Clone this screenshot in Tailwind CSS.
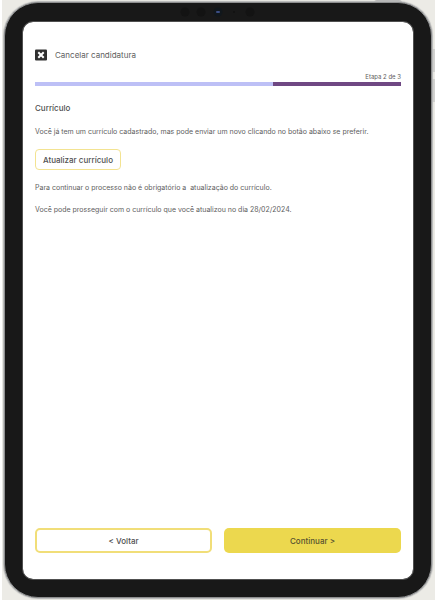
<!DOCTYPE html>
<html lang="pt-BR">
<head>
<meta charset="utf-8">
<meta name="viewport" content="width=device-width, initial-scale=1">
<title>Candidatura</title>
<script src="https://cdn.jsdelivr.net/npm/@tailwindcss/browser@4"></script>
</head>
<body class="bg-white pl-[2px] font-['Inter','Liberation_Sans',sans-serif] text-[#606060]">
<div class="relative flex min-h-screen flex-col bg-[#ecebe6] pt-[2px] pr-[3px] pb-[2px] pl-[2px]">
  <!-- side and top hardware buttons -->
  <span class="absolute top-0 right-[33px] h-[3px] w-[28px] rounded-t-sm bg-[#b8b8b8]"></span>
  <span class="absolute top-[49px] right-0 h-[23px] w-[3px] bg-[#d2d2d0]"></span>
  <span class="absolute top-[79px] right-0 h-[23px] w-[3px] bg-[#d2d2d0]"></span>
  <div class="relative flex flex-1 flex-col rounded-[34px] border border-[#8d8e8f] bg-[#181818] px-[18px] pt-[19px] pb-[18px] shadow-[0_0_1px_1px_#b5b6b6]">
    <svg class="absolute top-0 left-1/2 h-[18px] w-[80px] -translate-x-1/2" viewBox="0 0 80 18" aria-hidden="true">
      <circle cx="7" cy="9" r="4.5" fill="#131313"/>
      <circle cx="23" cy="9" r="4.5" fill="#131313"/>
      <circle cx="40" cy="9" r="4.5" fill="#11171c"/>
      <rect x="38" y="8" width="4" height="2" rx="1" fill="#3c4e84"/>
      <circle cx="56" cy="9" r="1" fill="#111"/>
      <circle cx="72" cy="9" r="4.5" fill="#131313"/>
    </svg>
    <main class="flex flex-1 flex-col rounded-[10px] bg-white px-3 pt-[27px] pb-[26px] outline outline-[#777]/60">
      <button type="button" class="flex h-3 items-center gap-2 self-start text-[8px] leading-3">
        <svg class="size-3" viewBox="0 0 12 12" aria-hidden="true">
          <rect x="0" y="0.5" width="12" height="11" rx="1" fill="#303030"/>
          <path d="M4 4l4 4M8 4l-4 4" stroke="#fff" stroke-width="2" stroke-linecap="square"/>
        </svg>
        <span>Cancelar candidatura</span>
      </button>
      <p id="etapa" class="mt-3 text-right text-[6px] leading-[8px]">Etapa 2 de 3</p>
      <div role="progressbar" aria-labelledby="etapa" aria-valuemin="0" aria-valuemax="3" aria-valuenow="2" class="mt-px flex h-1 bg-[#6f4883]">
        <div class="bg-[#bdc0f6]" style="width:65%"></div>
      </div>
      <h1 class="mt-4 text-[8px] leading-3 font-medium text-[#505050]">Currículo</h1>
      <p class="mt-3 text-[7px] leading-3">Você já tem um currículo cadastrado, mas pode enviar um novo clicando no botão abaixo se preferir.</p>
      <button type="button" class="mt-[11px] h-[21px] self-start rounded-[4px] border border-[#f3e391] px-[7px] text-[8px] font-medium text-[#505050]">Atualizar currículo</button>
      <p class="mt-3 text-[7px] leading-3">Para continuar o processo não é obrigatório a&nbsp; atualização do currículo.</p>
      <p class="mt-[10px] text-[7px] leading-3">Você pode prosseguir com o currículo que você atualizou no dia 28/02/2024.</p>
      <div class="mt-auto grid grid-cols-2 gap-3 text-[8px] font-medium">
        <button type="button" class="h-[25px] rounded-[5px] border-2 border-[#f1de78] text-[#505050]">&lt; Voltar</button>
        <button type="button" class="h-[25px] rounded-[5px] bg-[#ecd84e] text-[#575230]">Continuar &gt;</button>
      </div>
    </main>
  </div>
</div>
</body>
</html>
